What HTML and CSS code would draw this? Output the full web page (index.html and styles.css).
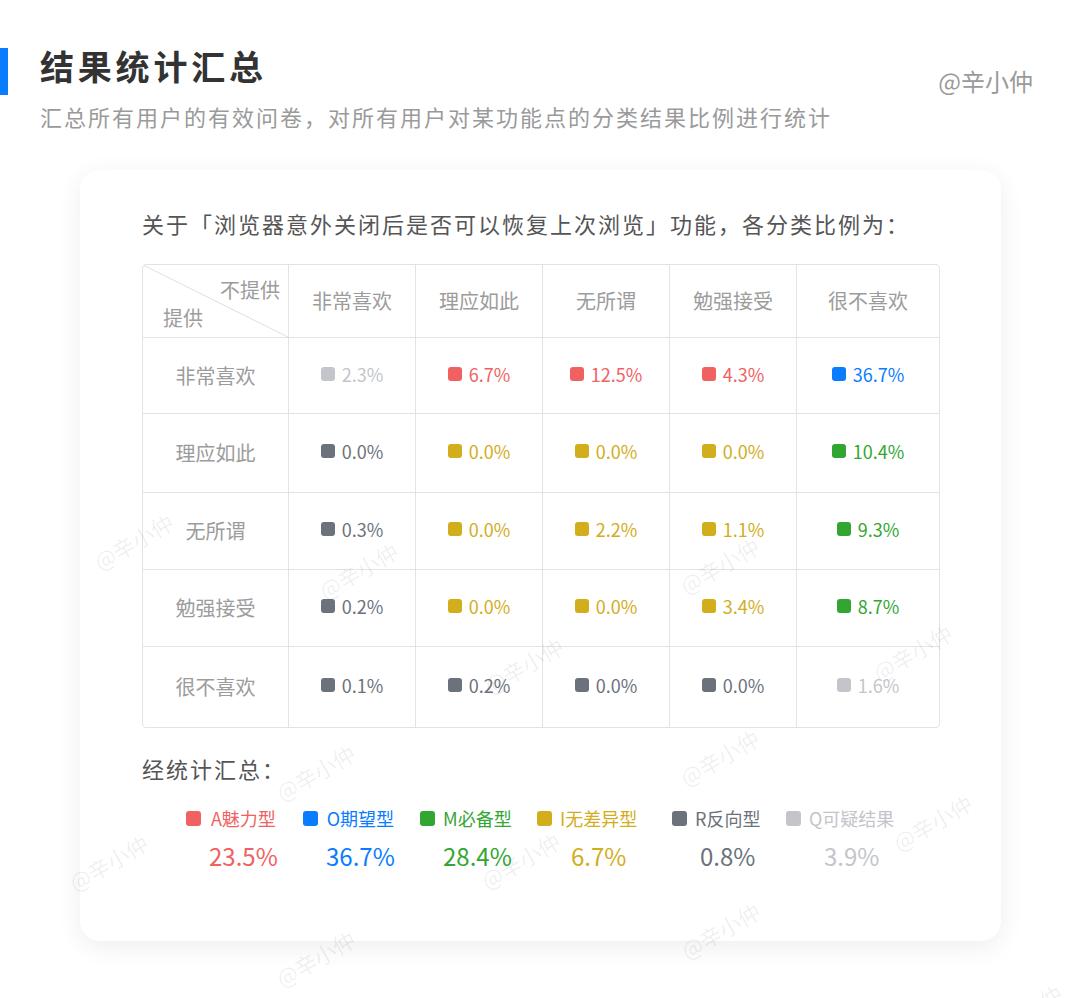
FILE: index.html
```html
<!DOCTYPE html>
<html lang="zh-CN">
<head>
<meta charset="utf-8">
<title>结果统计汇总</title>
<link rel="stylesheet" href="styles.css">
</head>
<body>
<div class="page">
  <header class="head">
    <div class="bar"></div>
    <div class="head-text">
      <h1 class="title">结果统计汇总</h1>
      <p class="subtitle">汇总所有用户的有效问卷，对所有用户对某功能点的分类结果比例进行统计</p>
    </div>
    <div class="author">@辛小仲</div>
  </header>

  <section class="card">
    <p class="question">关于「浏览器意外关闭后是否可以恢复上次浏览」功能，各分类比例为：</p>

    <div class="grid">
      <div class="cell corner"><span class="c-top">不提供</span><span class="c-bot">提供</span></div>
      <div class="cell th">非常喜欢</div>
      <div class="cell th">理应如此</div>
      <div class="cell th">无所谓</div>
      <div class="cell th">勉强接受</div>
      <div class="cell th">很不喜欢</div>

      <div class="cell th">非常喜欢</div>
      <div class="cell"><span class="v q"><i></i>2.3%</span></div>
      <div class="cell"><span class="v a"><i></i>6.7%</span></div>
      <div class="cell"><span class="v a"><i></i>12.5%</span></div>
      <div class="cell"><span class="v a"><i></i>4.3%</span></div>
      <div class="cell"><span class="v o"><i></i>36.7%</span></div>

      <div class="cell th">理应如此</div>
      <div class="cell"><span class="v r"><i></i>0.0%</span></div>
      <div class="cell"><span class="v n"><i></i>0.0%</span></div>
      <div class="cell"><span class="v n"><i></i>0.0%</span></div>
      <div class="cell"><span class="v n"><i></i>0.0%</span></div>
      <div class="cell"><span class="v m"><i></i>10.4%</span></div>

      <div class="cell th">无所谓</div>
      <div class="cell"><span class="v r"><i></i>0.3%</span></div>
      <div class="cell"><span class="v n"><i></i>0.0%</span></div>
      <div class="cell"><span class="v n"><i></i>2.2%</span></div>
      <div class="cell"><span class="v n"><i></i>1.1%</span></div>
      <div class="cell"><span class="v m"><i></i>9.3%</span></div>

      <div class="cell th">勉强接受</div>
      <div class="cell"><span class="v r"><i></i>0.2%</span></div>
      <div class="cell"><span class="v n"><i></i>0.0%</span></div>
      <div class="cell"><span class="v n"><i></i>0.0%</span></div>
      <div class="cell"><span class="v n"><i></i>3.4%</span></div>
      <div class="cell"><span class="v m"><i></i>8.7%</span></div>

      <div class="cell th">很不喜欢</div>
      <div class="cell"><span class="v r"><i></i>0.1%</span></div>
      <div class="cell"><span class="v r"><i></i>0.2%</span></div>
      <div class="cell"><span class="v r"><i></i>0.0%</span></div>
      <div class="cell"><span class="v r"><i></i>0.0%</span></div>
      <div class="cell"><span class="v q"><i></i>1.6%</span></div>
    </div>

    <p class="summary">经统计汇总：</p>

    <div class="legend">
      <div class="item a"><i></i><div class="txt"><span class="lab">A魅力型</span><span class="val">23.5%</span></div></div>
      <div class="item o"><i></i><div class="txt"><span class="lab">O期望型</span><span class="val">36.7%</span></div></div>
      <div class="item m"><i></i><div class="txt"><span class="lab">M必备型</span><span class="val">28.4%</span></div></div>
      <div class="item n"><i></i><div class="txt"><span class="lab">I无差异型</span><span class="val">6.7%</span></div></div>
      <div class="item r"><i></i><div class="txt"><span class="lab">R反向型</span><span class="val">0.8%</span></div></div>
      <div class="item q"><i></i><div class="txt"><span class="lab">Q可疑结果</span><span class="val">3.9%</span></div></div>
    </div>
  </section>
</div>

<div class="wm-layer" aria-hidden="true">
  <span class="wm wm1">@辛小仲</span>
  <span class="wm wm2">@辛小仲</span>
  <span class="wm wm3">@辛小仲</span>
  <span class="wm wm4">@辛小仲</span>
  <span class="wm wm5">@辛小仲</span>
  <span class="wm wm6">@辛小仲</span>
  <span class="wm wm7">@辛小仲</span>
  <span class="wm wm8">@辛小仲</span>
  <span class="wm wm9">@辛小仲</span>
  <span class="wm wm10">@辛小仲</span>
  <span class="wm wm11">@辛小仲</span>
  <span class="wm wm12">@辛小仲</span>
  <span class="wm wm13">@辛小仲</span>
</div>
</body>
</html>
```

FILE: styles.css
```css
html, body {
  margin: 0;
  padding: 0;
}

body {
  width: 1080px;
  height: 998px;
  overflow: hidden;
  position: relative;
  background: #ffffff;
  font-family: "Noto Sans CJK SC", "Noto Sans", sans-serif;
  color: #333;
}

.page {
  display: flex;
  flex-direction: column;
}

/* ---------- header ---------- */
.head {
  display: flex;
  align-items: flex-start;
  padding-top: 44px;
}

.bar {
  width: 8px;
  height: 47px;
  margin-top: 4px;
  margin-right: 32px;
  background: #0a7cff;
  flex: none;
}

.title {
  margin: 0;
  font-size: 34px;
  line-height: 44px;
  font-weight: 600;
  letter-spacing: 3.8px;
  color: #333;
}

.subtitle {
  margin: 13px 0 0;
  font-size: 22px;
  line-height: 30px;
  letter-spacing: 2px;
  color: #9a9a9a;
}

.author {
  margin-left: auto;
  margin-right: 47px;
  margin-top: 21px;
  font-size: 24px;
  line-height: 32px;
  color: #9a9a9a;
}

/* ---------- card ---------- */
.card {
  box-sizing: border-box;
  width: 921px;
  margin: 39px 0 0 80px;
  padding: 38px 61px 69px 62px;
  background: #fff;
  border-radius: 20px;
  box-shadow: 0 6px 26px rgba(0, 0, 0, 0.07);
}

.question,
.summary {
  margin: 0;
  font-size: 22px;
  line-height: 30px;
  letter-spacing: 2px;
  color: #555;
}

.question {
  margin-bottom: 26px;
}

.summary {
  margin-top: 25px;
}

/* ---------- table ---------- */
.grid {
  display: grid;
  grid-template-columns: 145px 126px 126px 126px 126px 142px;
  grid-template-rows: 72px 75px 78px 76px 76px 80px;
  gap: 1px;
  width: max-content;
  background: #e3e3e3;
  border: 1px solid #e3e3e3;
  border-radius: 4px;
  overflow: hidden;
}

.cell {
  background: #fff;
  display: flex;
  align-items: center;
  justify-content: center;
  padding-bottom: 4px;
  box-sizing: border-box;
}

.th {
  font-size: 20px;
  line-height: 28px;
  color: #9c9c9c;
  padding-bottom: 0;
}

.corner {
  flex-direction: column;
  align-items: stretch;
  justify-content: flex-start;
  padding: 11px 8px 0 20px;
  font-size: 20px;
  line-height: 28px;
  color: #9c9c9c;
  background:
    linear-gradient(to top right,
      #fff calc(50% - 0.8px),
      #dcdcdc 50%,
      #fff calc(50% + 0.8px));
}

.c-top {
  align-self: flex-end;
}

.c-bot {
  align-self: flex-start;
}

.v {
  display: flex;
  align-items: center;
  gap: 7px;
  font-size: 18px;
  line-height: 24px;
}

.v i {
  display: block;
  width: 14px;
  height: 14px;
  border-radius: 3px;
  background: currentColor;
}

/* category colours */
.a { color: #f06262; }
.o { color: #0a7cff; }
.m { color: #33a632; }
.n { color: #d2ad1c; }
.r { color: #6b727c; }
.q { color: #c3c5ca; }

/* ---------- legend ---------- */
.legend {
  display: grid;
  grid-template-columns: 117px 117px 117px 135px 114px auto;
  margin: 23px 0 0 44px;
}

.item {
  display: flex;
  align-items: flex-start;
  gap: 8px;
}

.item i {
  display: block;
  flex: none;
  width: 15px;
  height: 15px;
  margin-top: 5px;
  border-radius: 3px;
  background: currentColor;
}

.txt {
  display: flex;
  flex-direction: column;
  align-items: center;
}

.lab {
  font-size: 18px;
  line-height: 24px;
}

.val {
  margin-top: 10px;
  font-size: 24px;
  line-height: 32px;
}

/* ---------- watermark ---------- */
.wm-layer {
  position: absolute;
  left: 0;
  top: 0;
  width: 1080px;
  height: 998px;
  overflow: hidden;
  pointer-events: none;
}

.wm {
  position: absolute;
  font-size: 22px;
  line-height: 1;
  color: rgba(0, 0, 0, 0.07);
  white-space: nowrap;
  transform: translate(-50%, -50%) rotate(-30deg);
}

.wm1  { left: 133px; top: 541px; }
.wm2  { left: 358px; top: 570px; }
.wm3  { left: 523px; top: 665px; }
.wm4  { left: 719px; top: 565px; }
.wm5  { left: 912px; top: 652px; }
.wm6  { left: 719px; top: 757px; }
.wm7  { left: 932px; top: 822px; }
.wm8  { left: 108px; top: 862px; }
.wm9  { left: 315px; top: 772px; }
.wm10 { left: 520px; top: 860px; }
.wm11 { left: 315px; top: 958px; }
.wm12 { left: 720px; top: 930px; }
.wm13 { left: 1022px; top: 1012px; }
```
